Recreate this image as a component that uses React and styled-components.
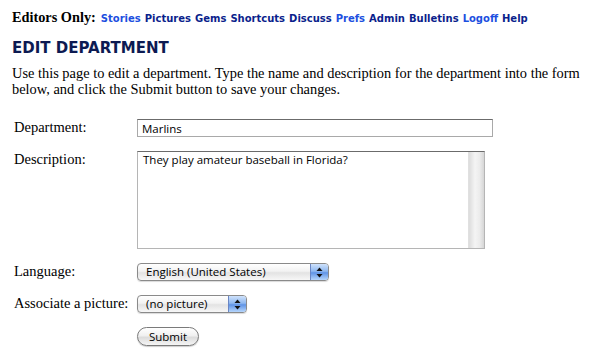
import React from "react";
import styled, { createGlobalStyle } from "styled-components";

const GlobalStyle = createGlobalStyle`
  html, body {
    margin: 0;
    padding: 0;
    background: #ffffff;
  }
  body {
    font-family: "Liberation Serif", "Times New Roman", serif;
    color: #000;
  }
`;

const links = [
  { label: "Stories", fresh: true },
  { label: "Pictures" },
  { label: "Gems" },
  { label: "Shortcuts" },
  { label: "Discuss" },
  { label: "Prefs", fresh: true },
  { label: "Admin" },
  { label: "Bulletins" },
  { label: "Logoff", fresh: true },
  { label: "Help" },
];

export default function App() {
  return (
    <>
      <GlobalStyle />
      <Page>
        <NavBar>
          <NavTitle>Editors Only:</NavTitle>
          {links.map((l) => (
            <NavLink key={l.label} href="#" $fresh={l.fresh}>
              {l.label}
            </NavLink>
          ))}
        </NavBar>

        <Heading>EDIT DEPARTMENT</Heading>

        <Intro>
          Use this page to edit a department. Type the name and description for the department into the form
          below, and click the Submit button to save your changes.
        </Intro>

        <Form onSubmit={(e) => e.preventDefault()}>
          <Label>Department:</Label>
          <TextField defaultValue="Marlins" />

          <Label>Description:</Label>
          <AreaWrap>
            <TextArea defaultValue="They play amateur baseball in Florida?" />
            <ScrollTrack />
          </AreaWrap>

          <Label>Language:</Label>
          <Select $width={192}>
            <span>English (United States)</span>
            <Arrows />
          </Select>

          <Label>Associate a picture:</Label>
          <Select $width={110}>
            <span>(no picture)</span>
            <Arrows />
          </Select>

          <span />
          <SubmitButton type="submit">Submit</SubmitButton>
        </Form>
      </Page>
    </>
  );
}

function Arrows() {
  return (
    <ArrowCap>
      <svg width="7" height="11" viewBox="0 0 7 11">
        <path d="M3.5 0.5 L6.5 4 L0.5 4 Z" fill="#111" />
        <path d="M3.5 10.5 L6.5 7 L0.5 7 Z" fill="#111" />
      </svg>
    </ArrowCap>
  );
}

const Page = styled.div`
  padding: 9px 12px;
`;

const NavBar = styled.div`
  display: flex;
  align-items: baseline;
  gap: 4px;
  white-space: nowrap;
`;

const NavTitle = styled.span`
  font-family: "Liberation Serif", "Times New Roman", serif;
  font-weight: bold;
  font-size: 14.3px;
  margin-right: 1px;
`;

const NavLink = styled.a`
  font-family: "DejaVu Sans", Verdana, sans-serif;
  font-weight: bold;
  font-size: 10px;
  text-decoration: none;
  color: ${(p) => (p.$fresh ? "#1c4fe0" : "#0b1f8c")};
`;

const Heading = styled.h1`
  font-family: "DejaVu Sans", Verdana, sans-serif;
  font-weight: bold;
  font-size: 15px;
  line-height: 18px;
  color: #0c1a52;
  margin: 13px 0 0;
`;

const Intro = styled.p`
  font-size: 14.4px;
  line-height: 16px;
  margin: 8px 0 0;
`;

const Form = styled.form`
  display: grid;
  grid-template-columns: 125px auto;
  justify-items: start;
  align-items: start;
  row-gap: 14px;
  margin-top: 22px;
  padding-left: 2px;
`;

const Label = styled.label`
  font-size: 14.5px;
  line-height: 16px;
  white-space: nowrap;
`;

const TextField = styled.input`
  box-sizing: border-box;
  width: 356px;
  height: 18px;
  margin: 0 0 0 -2px;
  padding: 1px 4px 0;
  border: 1px solid #a9a9a9;
  border-top-color: #6b6b6b;
  font-family: "Open Sans", "Lucida Grande", sans-serif;
  font-size: 11.5px;
  color: #000;
  outline: none;
`;

const AreaWrap = styled.div`
  display: flex;
  box-sizing: border-box;
  width: 348px;
  height: 98px;
  margin-left: -2px;
  border: 1px solid #b5b5b5;
  border-top-color: #6b6b6b;
`;

const TextArea = styled.textarea`
  flex: 1;
  border: none;
  resize: none;
  padding: 0 5px;
  font-family: "Open Sans", "Lucida Grande", sans-serif;
  font-size: 11.5px;
  line-height: 15px;
  color: #000;
  outline: none;
  overflow: hidden;
`;

const ScrollTrack = styled.div`
  width: 15px;
  background: linear-gradient(to right, #dcdcdc, #f4f4f4 40%, #ececec 70%, #d6d6d6);
  border-left: 1px solid #e0e0e0;
`;

const Select = styled.div`
  position: relative;
  box-sizing: border-box;
  width: ${(p) => p.$width}px;
  height: 18px;
  margin-left: -2px;
  border: 1px solid #8a8a8a;
  border-radius: 4px;
  background: linear-gradient(to bottom, #ffffff, #f2f2f2 45%, #e3e3e3 55%, #f7f7f7);
  box-shadow: 0 1px 1px rgba(0, 0, 0, 0.15);
  font-family: "Open Sans", "Lucida Grande", sans-serif;
  font-size: 11.5px;
  line-height: 16px;
  padding-left: 8px;
  color: #000;
  overflow: hidden;
`;

const ArrowCap = styled.span`
  position: absolute;
  top: 0;
  right: 0;
  bottom: 0;
  width: 17px;
  display: flex;
  align-items: center;
  justify-content: center;
  border-left: 1px solid #6a86c4;
  background: linear-gradient(to bottom, #cfe2fb, #8fb8f0 45%, #5f93e6 55%, #b6d6fc);
`;

const SubmitButton = styled.button`
  box-sizing: border-box;
  width: 62px;
  height: 19px;
  margin-left: -2px;
  border: 1px solid #7a7a7a;
  border-radius: 10px;
  background: linear-gradient(to bottom, #ffffff, #f0f0f0 45%, #dcdcdc 55%, #f5f5f5);
  box-shadow: 0 1px 1px rgba(0, 0, 0, 0.2);
  font-family: "Open Sans", "Lucida Grande", sans-serif;
  font-size: 11.5px;
  line-height: 16px;
  color: #000;
  padding: 0;
`;
